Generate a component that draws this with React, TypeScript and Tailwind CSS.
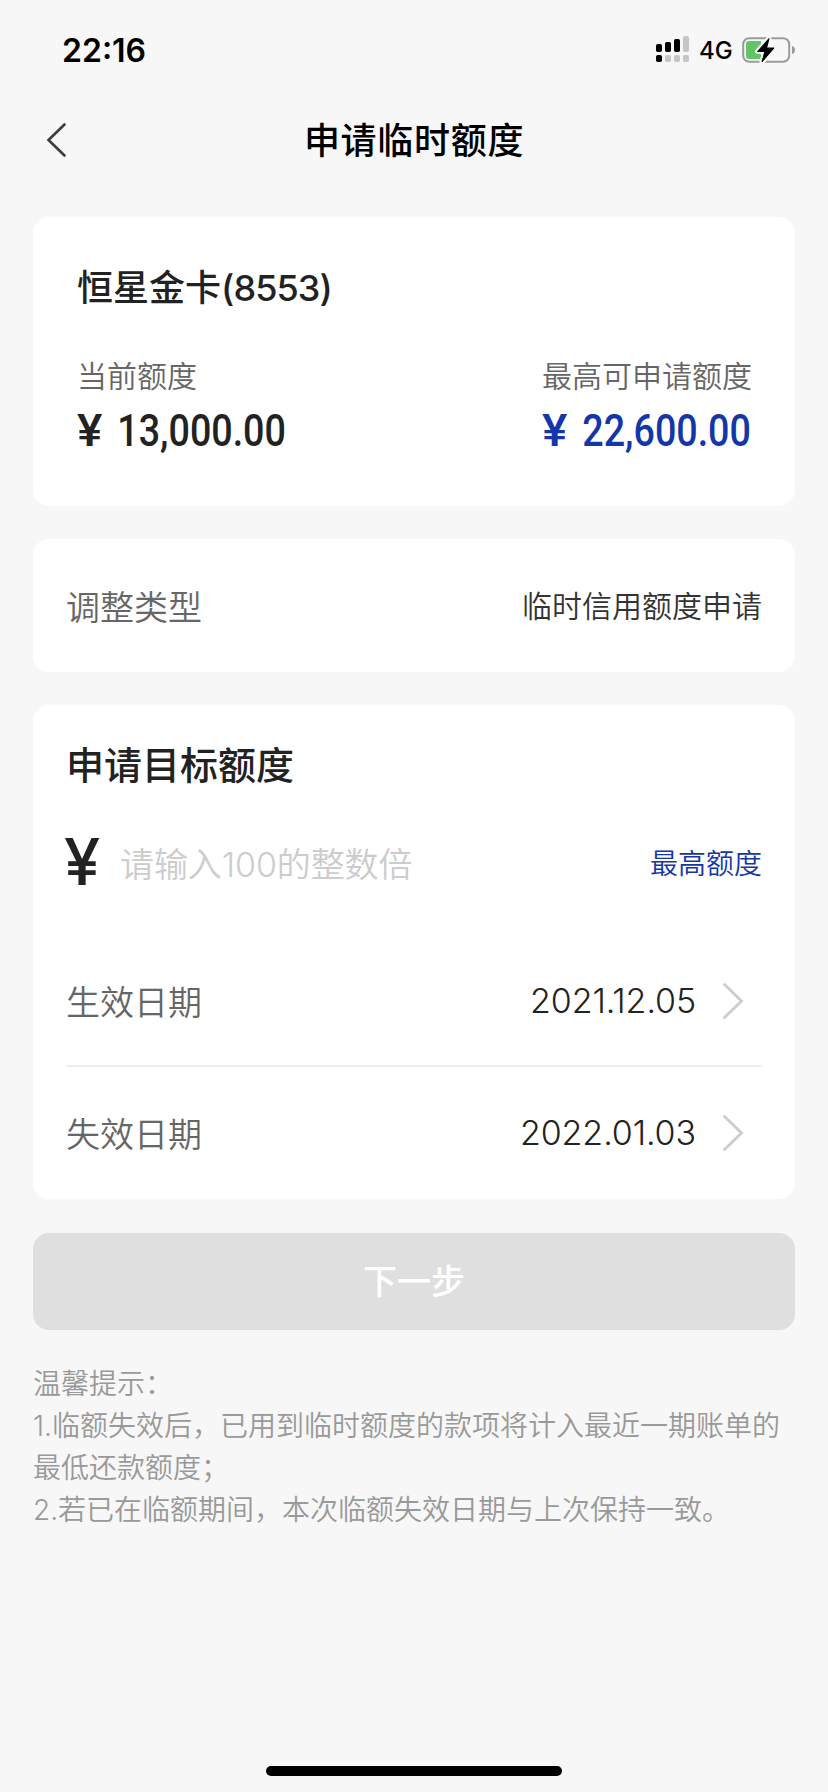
import React, { useState } from 'react';

const MAX_AMOUNT = '22600';

// Status bar
const StatusBar: React.FC = () => (
  <div className="flex h-[100px] items-center justify-between pl-[62px] pr-[32px]">
    <span className="pt-[1px] text-[32px] leading-[40px] font-semibold text-black">22:16</span>
    <div className="flex items-center text-black">
      <svg className="h-[28px] w-[34px]" viewBox="0 0 34 28">
        <rect x="0" y="8" width="6" height="8" rx="1.8" fill="#000" />
        <rect x="9" y="6" width="6" height="10" rx="1.8" fill="#000" />
        <rect x="18" y="3" width="6" height="13" rx="1.8" fill="#000" />
        <rect x="27" y="0" width="6" height="16" rx="1.8" fill="#c6c6c6" />
        <rect x="0" y="19" width="6" height="7" rx="1.8" fill="#000" />
        <rect x="9" y="19" width="6" height="7" rx="1.8" fill="#c6c6c6" />
        <rect x="18" y="19" width="6" height="7" rx="1.8" fill="#c6c6c6" />
        <rect x="27" y="19" width="6" height="7" rx="1.8" fill="#c6c6c6" />
      </svg>
      <span className="ml-[9px] w-[33px] pt-[2px] text-[24px] leading-[28px] font-medium">4G</span>
      <svg className="ml-[10px] h-[28px] w-[54px]" viewBox="0 0 54 28">
        <rect x="1.2" y="2.2" width="46" height="23.6" rx="6" fill="none" stroke="#9b9b9b" strokeWidth="2" />
        <path d="M50 10c4 1 4 7 0 8z" fill="#9b9b9b" />
        <path d="M7 5h12v18H7a3 3 0 0 1-3-3V8a3 3 0 0 1 3-3z" fill="#62c466" />
        <path d="M27 2.5L15.5 15.5h7.3L20 26 32 12h-7.4z" fill="#000" stroke="#f7f7f7" strokeWidth="5" strokeLinejoin="round" />
        <path d="M27 2.5L15.5 15.5h7.3L20 26 32 12h-7.4z" fill="#000" stroke="#000" strokeWidth="1" strokeLinejoin="round" />
      </svg>
    </div>
  </div>
);

const NavBar: React.FC = () => (
  <header className="grid h-[80px] grid-cols-[80px_1fr_80px] items-center">
    <button className="pl-[46px]" aria-label="返回">
      <svg className="h-[36px] w-[22px]" viewBox="0 0 22 36" fill="none" stroke="#3c3c3c" strokeWidth="2.6" strokeLinecap="round">
        <path d="M18.5 2.5L2.5 18l16 15.5" />
      </svg>
    </button>
    <h1 className="pt-[2px] text-center text-[36px] leading-[50px] font-medium tracking-[0.7px] text-black">申请临时额度</h1>
  </header>
);

interface AmountProps {
  label: string;
  value: string;
  className?: string;
}

const Amount: React.FC<AmountProps> = ({ label, value, className = 'text-[#222]' }) => (
  <div className="w-[209px]">
    <div className="text-[30px] leading-[42px] font-[350] whitespace-nowrap text-[#666]">{label}</div>
    <div className={`mt-[10px] flex items-center justify-between font-[Roboto] text-[43.5px] leading-[50px] font-medium ${className}`}>
      <span className="origin-left scale-x-110">¥</span>
      <span className="-ml-8 origin-right scale-x-[0.865]">{value}</span>
    </div>
  </div>
);

interface DateRowProps {
  label: string;
  value: string;
}

const DateRow: React.FC<DateRowProps> = ({ label, value }) => (
  <div className="flex h-[130px] items-center pt-[2px]">
    <span className="pt-[3px] text-[34px] leading-[48px] font-[350] text-[#666]">{label}</span>
    <span className="ml-auto text-[34px] leading-[48px] font-[350] tracking-[-0.1px] text-[#222]">{value}</span>
    <svg className="mr-[18px] ml-[26px] h-[36px] w-[22px]" viewBox="0 0 22 36" fill="none" stroke="#ccc" strokeWidth="2.8" strokeLinecap="round">
      <path d="M2.5 1.5L19.5 18l-17 16.5" />
    </svg>
  </div>
);

const App: React.FC = () => {
  const [amount, setAmount] = useState('');

  return (
    <div className="flex h-[1792px] w-[828px] flex-col bg-[#f7f7f7] font-[Inter,'Noto_Sans_CJK_SC',sans-serif]">
      <StatusBar />
      <NavBar />

      <main className="flex flex-col px-[33px] pt-[37px]">
        <section className="h-[289px] rounded-2xl bg-white px-[44px] pt-[46px]">
          <h2 className="text-[36px] leading-[50px] font-medium text-[#222]">
            恒星金卡<span className="tracking-[-0.9px]">(8553)</span>
          </h2>
          <div className="mt-[42px] flex justify-between">
            <Amount label="当前额度" value="13,000.00" />
            <Amount label="最高可申请额度" value="22,600.00" className="text-[#1336a8]" />
          </div>
        </section>

        <section className="mt-[33px] flex h-[133px] items-center justify-between rounded-2xl bg-white px-[33px]">
          <span className="pt-[4px] text-[34px] leading-[48px] font-[350] text-[#666]">调整类型</span>
          <span className="text-[30px] leading-[42px] font-[350] text-[#333]">临时信用额度申请</span>
        </section>

        <section className="mt-[33px] h-[494px] rounded-2xl bg-white px-[33px] pt-[34px]">
          <h2 className="text-[38px] leading-[52px] font-medium text-[#222]">申请目标额度</h2>
          <div className="mt-[23px] flex h-[100px] items-center">
            <span className="-ml-[2px] w-[56px] pb-[5px] text-[65px] leading-[60px] font-medium text-[#222]">¥</span>
            <input
              value={amount}
              onChange={(e) => setAmount(e.target.value)}
              placeholder="请输入100的整数倍"
              className="h-[60px] w-[360px] text-[34px] font-[350] tracking-[-0.1px] text-[#222] outline-none placeholder:text-[#ccc]"
            />
            <button onClick={() => setAmount(MAX_AMOUNT)} className="ml-auto text-[28px] leading-[40px] font-[350] text-[#1336a8]">
              最高额度
            </button>
          </div>
          <div className="mt-[21px]">
            <DateRow label="生效日期" value="2021.12.05" />
            <div className="h-[2px] bg-[#eee]" />
            <DateRow label="失效日期" value="2022.01.03" />
          </div>
        </section>

        <button className="mt-[34px] h-[97px] rounded-2xl bg-[#dfdfdf] text-[34px] font-medium text-white">下一步</button>

        <div className="mt-[33px] text-[28px] leading-[42px] font-[350] text-[#999]">
          <p>温馨提示：</p>
          <p>1.临额失效后，已用到临时额度的款项将计入最近一期账单的最低还款额度；</p>
          <p>2.若已在临额期间，本次临额失效日期与上次保持一致。</p>
        </div>
      </main>

      {/* Home indicator */}
      <div className="mt-auto mb-[16px] h-[10px] w-[296px] self-center rounded-full bg-black" />
    </div>
  );
};

export default App;
